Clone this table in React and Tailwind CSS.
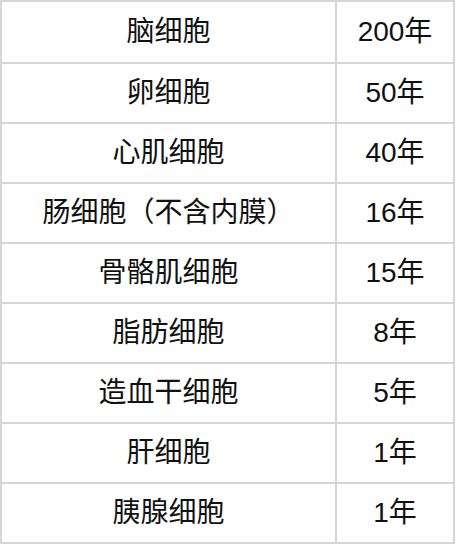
const rows = [
  ["脑细胞", "200年"],
  ["卵细胞", "50年"],
  ["心肌细胞", "40年"],
  ["肠细胞（不含内膜）", "16年"],
  ["骨骼肌细胞", "15年"],
  ["脂肪细胞", "8年"],
  ["造血干细胞", "5年"],
  ["肝细胞", "1年"],
  ["胰腺细胞", "1年"],
];

export default function App() {
  return (
    <div className="w-[456px] h-[544px] bg-white">
      <table
        className="w-[455px] border-collapse text-[#111] text-[28px]"
        style={{ fontFamily: '"Liberation Sans", "Noto Sans CJK SC", sans-serif' }}
      >
        <tbody>
          {rows.map(([name, years], i) => (
            <tr key={name} className={i === 0 ? "h-[62px]" : "h-[60px]"}>
              <td className="w-[335px] border-2 border-[#d6d6d6] text-center p-0 leading-none">
                {name}
              </td>
              <td className="border-2 border-[#d6d6d6] text-center p-0 leading-none">
                {years}
              </td>
            </tr>
          ))}
        </tbody>
      </table>
    </div>
  );
}
